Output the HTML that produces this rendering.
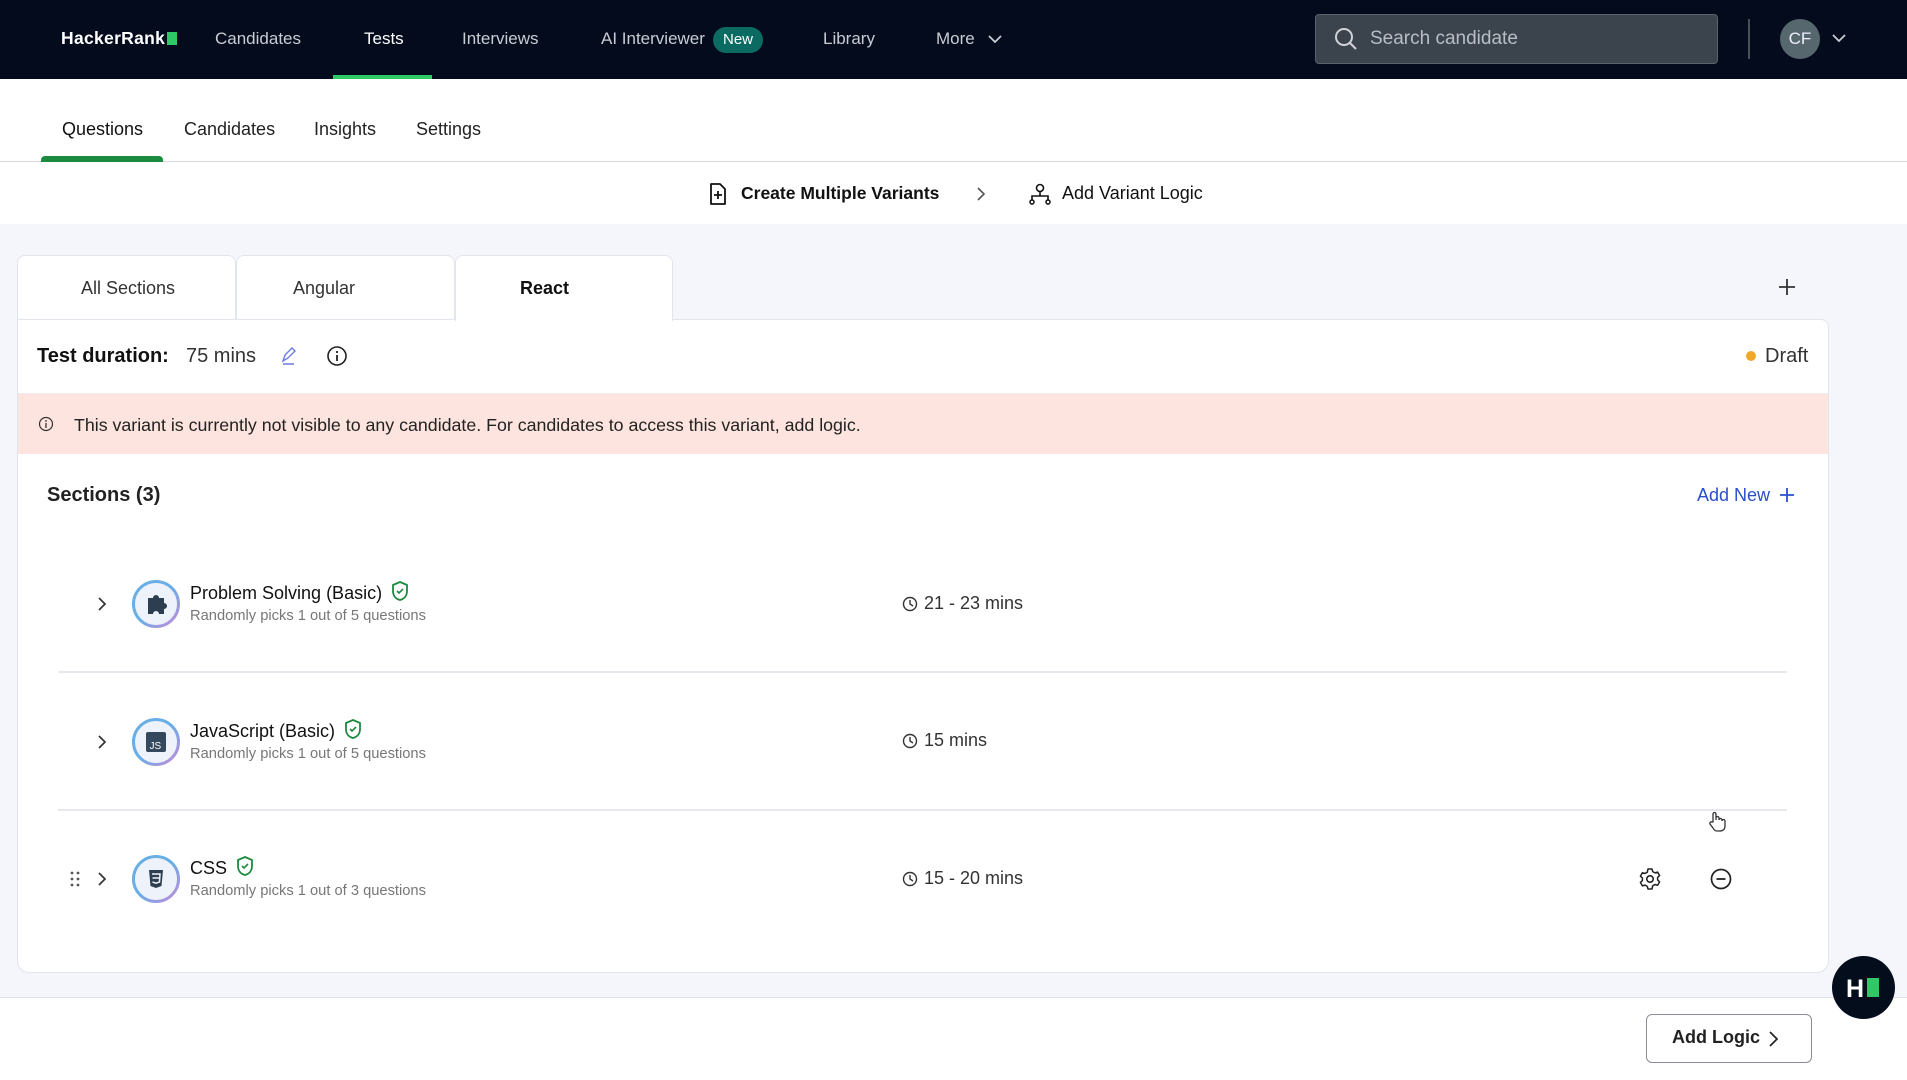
<!DOCTYPE html>
<html><head><meta charset="utf-8"><style>
*{box-sizing:border-box;margin:0;padding:0}
body{width:1907px;height:1080px;position:relative;overflow:hidden;background:#f5f6fb;font-family:"Liberation Sans",sans-serif;color:#1a1a1a}
.a{position:absolute;white-space:nowrap}
.nav{left:0;top:0;width:1907px;height:79px;background:#030b1c}
.nv{color:#c9ccd3;font-size:17px;top:29px}
svg{position:absolute}
.sh{position:relative;display:inline-block;vertical-align:-3px;margin-left:8px}
</style></head><body>
<div class="a nav"></div>
<div class="a" style="left:61px;top:28px;color:#fff;font-weight:bold;font-size:17.5px;letter-spacing:0.3px">HackerRank<span style="display:inline-block;width:10px;height:13px;background:#2ec866;margin-left:2px;vertical-align:-1px"></span></div>
<div class="a nv" style="left:215px">Candidates</div>
<div class="a nv" style="left:364px;color:#fff">Tests</div>
<div class="a" style="left:333px;top:75px;width:99px;height:4px;background:#2ec866"></div>
<div class="a nv" style="left:462px">Interviews</div>
<div class="a nv" style="left:601px">AI Interviewer</div>
<div class="a" style="left:713px;top:27px;width:50px;height:26px;border-radius:13px;background:#0b6b62;color:#fff;font-size:15px;text-align:center;line-height:26px">New</div>
<div class="a nv" style="left:823px">Library</div>
<div class="a nv" style="left:936px">More</div>
<svg style="left:987px;top:33px" width="16" height="12"><path d="M2 3l6 6 6-6" stroke="#c9ccd3" stroke-width="1.8" fill="none"/></svg>
<div class="a" style="left:1315px;top:14px;width:403px;height:50px;background:#3b434d;border:1px solid #5a626c;border-radius:4px"></div>
<svg style="left:1333px;top:26px" width="26" height="26"><circle cx="11" cy="11" r="8" stroke="#cfd3d8" stroke-width="2" fill="none"/><path d="M17 17l6 6" stroke="#cfd3d8" stroke-width="2"/></svg>
<div class="a" style="left:1370px;top:28px;color:#b9bec5;font-size:19px">Search candidate</div>
<div class="a" style="left:1748px;top:19px;width:2px;height:40px;background:#4a505a"></div>
<div class="a" style="left:1780px;top:19px;width:40px;height:40px;border-radius:50%;background:#57676e;color:#eef;font-size:17px;text-align:center;line-height:40px">CF</div>
<svg style="left:1831px;top:32px" width="16" height="12"><path d="M2 3l6 6 6-6" stroke="#c9ccd3" stroke-width="1.8" fill="none"/></svg>

<div class="a" style="left:0;top:79px;width:1907px;height:145px;background:#fff"></div>
<div class="a" style="left:62px;top:119px;font-size:18px;color:#111">Questions</div>
<div class="a" style="left:184px;top:119px;font-size:18px;color:#222">Candidates</div>
<div class="a" style="left:314px;top:119px;font-size:18px;color:#222">Insights</div>
<div class="a" style="left:416px;top:119px;font-size:18px;color:#222">Settings</div>
<div class="a" style="left:0;top:161px;width:1907px;height:1px;background:#d8dae2"></div>
<div class="a" style="left:41px;top:156px;width:122px;height:6px;background:#1c8a3f;border-radius:4px 4px 0 0"></div>
<svg style="left:707px;top:182px" width="22" height="24"><path d="M4 2h9l5 5v15H4z" stroke="#111" stroke-width="1.8" fill="none" stroke-linejoin="round"/><path d="M11 9v8M7 13h8" stroke="#111" stroke-width="1.8"/></svg>
<div class="a" style="left:741px;top:183px;font-size:17.5px;font-weight:bold;color:#111">Create Multiple Variants</div>
<svg style="left:975px;top:186px" width="12" height="16"><path d="M3 2l6 6-6 6" stroke="#555" stroke-width="1.6" fill="none"/></svg>
<svg style="left:1028px;top:182px" width="24" height="24"><circle cx="12" cy="6" r="3.5" stroke="#111" stroke-width="1.6" fill="none"/><path d="M12 10v4M4 18v-4h16v4" stroke="#111" stroke-width="1.6" fill="none"/><circle cx="4" cy="20" r="2" stroke="#111" stroke-width="1.5" fill="none"/><circle cx="20" cy="20" r="2" stroke="#111" stroke-width="1.5" fill="none"/></svg>
<div class="a" style="left:1062px;top:183px;font-size:18px;color:#111">Add Variant Logic</div>

<div class="a" style="left:17px;top:255px;width:219px;height:65px;background:#fff;border:1px solid #e3e5ec;border-radius:8px 8px 0 0"></div>
<div class="a" style="left:236px;top:255px;width:219px;height:65px;background:#fff;border:1px solid #e3e5ec;border-radius:8px 8px 0 0"></div>
<div class="a" style="left:455px;top:255px;width:218px;height:66px;background:#fff;border:1px solid #e3e5ec;border-bottom:none;border-radius:8px 8px 0 0;z-index:2"></div>
<div class="a" style="left:81px;top:278px;font-size:18px;color:#333">All Sections</div>
<div class="a" style="left:293px;top:278px;font-size:18px;color:#333">Angular</div>
<div class="a" style="left:520px;top:278px;font-size:18px;font-weight:bold;color:#111;z-index:3">React</div>
<svg style="left:1778px;top:278px" width="18" height="18"><path d="M9 1v16M1 9h16" stroke="#333" stroke-width="1.8"/></svg>

<div class="a" style="left:17px;top:319px;width:1812px;height:654px;background:#fff;border:1px solid #e3e5ec;border-radius:0 8px 12px 12px"></div>
<div class="a" style="left:37px;top:345px;font-size:20px;font-weight:bold;color:#111">Test duration:</div>
<div class="a" style="left:186px;top:345px;font-size:20px;color:#333">75 mins</div>
<svg style="left:280px;top:346px" width="18" height="20"><path d="M3 15l2-6 7-7 3 3-7 7zM3 18h11" stroke="#6a7de0" stroke-width="1.4" fill="none"/></svg>
<svg style="left:326px;top:345px" width="22" height="22"><circle cx="11" cy="11" r="9" stroke="#222" stroke-width="1.6" fill="none"/><path d="M11 10v6" stroke="#222" stroke-width="1.8"/><circle cx="11" cy="7" r="1.1" fill="#222"/></svg>
<div class="a" style="left:1746px;top:351px;width:10px;height:10px;border-radius:50%;background:#f0a926"></div>
<div class="a" style="left:1765px;top:345px;font-size:20px;color:#333">Draft</div>
<div class="a" style="left:18px;top:393px;width:1810px;height:61px;background:#fde4de;border-top:1px solid #eee"></div>
<svg style="left:38px;top:416px" width="16" height="16"><circle cx="8" cy="8" r="6.5" stroke="#333" stroke-width="1.2" fill="none"/><path d="M8 7v5" stroke="#333" stroke-width="1.3"/><circle cx="8" cy="5" r=".9" fill="#333"/></svg>
<div class="a" style="left:74px;top:415px;font-size:17.8px;color:#222">This variant is currently not visible to any candidate. For candidates to access this variant, add logic.</div>
<div class="a" style="left:47px;top:484px;font-size:20px;font-weight:bold;color:#222">Sections (3)</div>
<div class="a" style="left:1697px;top:485px;font-size:18px;color:#2a4fc9">Add New</div>
<svg style="left:1779px;top:487px" width="16" height="16"><path d="M8 1v14M1 8h14" stroke="#2a4fc9" stroke-width="1.8"/></svg>

<div class="a" style="left:58px;top:671px;width:1729px;height:2px;background:#e6e8ee"></div>
<div class="a" style="left:58px;top:809px;width:1729px;height:2px;background:#e6e8ee"></div>

<svg style="left:96px;top:596px" width="12" height="16"><path d="M3 2l6 6-6 6" stroke="#333" stroke-width="1.7" fill="none"/></svg>
<svg style="left:96px;top:734px" width="12" height="16"><path d="M3 2l6 6-6 6" stroke="#333" stroke-width="1.7" fill="none"/></svg>
<svg style="left:96px;top:871px" width="12" height="16"><path d="M3 2l6 6-6 6" stroke="#333" stroke-width="1.7" fill="none"/></svg>
<svg style="left:70px;top:870px" width="10" height="18"><g fill="#555"><circle cx="2" cy="3" r="1.4"/><circle cx="8" cy="3" r="1.4"/><circle cx="2" cy="9" r="1.4"/><circle cx="8" cy="9" r="1.4"/><circle cx="2" cy="15" r="1.4"/><circle cx="8" cy="15" r="1.4"/></g></svg>

<svg style="left:131px;top:579px" width="50" height="50"><defs><linearGradient id="g" x1="0" y1="0" x2="1" y2="1"><stop offset=".5" stop-color="#6aaee6"/><stop offset="1" stop-color="#c58ad8"/></linearGradient></defs><circle cx="25" cy="25" r="22.5" fill="#eef3fb" stroke="url(#g)" stroke-width="3"/><path d="M17 19h5a3 3 0 016 0h5v5a3 3 0 010 6v5h-5a3 3 0 00-6 0h-5z" fill="#2d3e50"/></svg>
<svg style="left:131px;top:717px" width="50" height="50"><circle cx="25" cy="25" r="22.5" fill="#eef3fb" stroke="url(#g)" stroke-width="3"/><rect x="15" y="15" width="20" height="20" rx="2" fill="#34495e"/><text x="18.5" y="32" font-family="Liberation Sans" font-size="10" fill="#fff">JS</text></svg>
<svg style="left:131px;top:854px" width="50" height="50"><circle cx="25" cy="25" r="22.5" fill="#eef3fb" stroke="url(#g)" stroke-width="3"/><path d="M18 16h14l-1.5 16-5.5 2-5.5-2z" fill="#2d3e50"/><path d="M21 20h8l-.5 8-3.5 1.2-3.5-1.2M21.5 24h7" stroke="#eef3fb" stroke-width="1.5" fill="none"/></svg>

<div class="a" style="left:190px;top:580px;font-size:18px;color:#111">Problem Solving (Basic)<svg class="sh" width="20" height="22"><path d="M10 2l7 3v6c0 5-3 8-7 9-4-1-7-4-7-9V5z" stroke="#1c8a3f" stroke-width="1.8" fill="none"/><path d="M7 11l2 2 4-4" stroke="#1c8a3f" stroke-width="1.6" fill="none"/></svg></div>
<div class="a" style="left:190px;top:608px;font-size:14.7px;color:#777">Randomly picks 1 out of 5 questions</div>
<div class="a" style="left:190px;top:718px;font-size:18px;color:#111">JavaScript (Basic)<svg class="sh" width="20" height="22"><path d="M10 2l7 3v6c0 5-3 8-7 9-4-1-7-4-7-9V5z" stroke="#1c8a3f" stroke-width="1.8" fill="none"/><path d="M7 11l2 2 4-4" stroke="#1c8a3f" stroke-width="1.6" fill="none"/></svg></div>
<div class="a" style="left:190px;top:746px;font-size:14.7px;color:#777">Randomly picks 1 out of 5 questions</div>
<div class="a" style="left:190px;top:855px;font-size:18px;color:#111">CSS<svg class="sh" width="20" height="22"><path d="M10 2l7 3v6c0 5-3 8-7 9-4-1-7-4-7-9V5z" stroke="#1c8a3f" stroke-width="1.8" fill="none"/><path d="M7 11l2 2 4-4" stroke="#1c8a3f" stroke-width="1.6" fill="none"/></svg></div>
<div class="a" style="left:190px;top:883px;font-size:14.7px;color:#777">Randomly picks 1 out of 3 questions</div>

<svg style="left:902px;top:596px" width="16" height="16"><circle cx="8" cy="8" r="6.5" stroke="#333" stroke-width="1.4" fill="none"/><path d="M8 4v4l3 2" stroke="#333" stroke-width="1.4" fill="none"/></svg>
<div class="a" style="left:924px;top:593px;font-size:18px;color:#333">21 - 23 mins</div>
<svg style="left:902px;top:733px" width="16" height="16"><circle cx="8" cy="8" r="6.5" stroke="#333" stroke-width="1.4" fill="none"/><path d="M8 4v4l3 2" stroke="#333" stroke-width="1.4" fill="none"/></svg>
<div class="a" style="left:924px;top:730px;font-size:18px;color:#333">15 mins</div>
<svg style="left:902px;top:871px" width="16" height="16"><circle cx="8" cy="8" r="6.5" stroke="#333" stroke-width="1.4" fill="none"/><path d="M8 4v4l3 2" stroke="#333" stroke-width="1.4" fill="none"/></svg>
<div class="a" style="left:924px;top:868px;font-size:18px;color:#333">15 - 20 mins</div>

<svg style="left:1638px;top:867px" width="24" height="24"><circle cx="12" cy="12" r="3.2" stroke="#222" stroke-width="1.6" fill="none"/><path d="M10 2h4l.7 2.6 2.3 1.3 2.6-.8 2 3.5-2 1.8v2.6l2 1.8-2 3.5-2.6-.8-2.3 1.3L14 22h-4l-.7-2.6-2.3-1.3-2.6.8-2-3.5 2-1.8v-2.6l-2-1.8 2-3.5 2.6.8 2.3-1.3z" stroke="#222" stroke-width="1.5" fill="none" stroke-linejoin="round"/></svg>
<svg style="left:1709px;top:867px" width="24" height="24"><circle cx="12" cy="12" r="9.5" stroke="#222" stroke-width="1.7" fill="none"/><path d="M7.5 12h9" stroke="#222" stroke-width="1.8"/></svg>
<svg style="left:1707px;top:810px" width="20" height="24"><path d="M6 12V4a1.5 1.5 0 013 0v6V8a1.5 1.5 0 013 0v2a1.5 1.5 0 013 0v1a1.5 1.5 0 013 0v5c0 3-2 5-5 5h-3c-2 0-3-1-4-3l-3-4a1.5 1.5 0 012-2z" stroke="#333" stroke-width="1.3" fill="#fff"/></svg>

<div class="a" style="left:0;top:997px;width:1907px;height:83px;background:#fff;border-top:1px solid #e0e2e8"></div>
<div class="a" style="left:1646px;top:1014px;width:166px;height:49px;border:1.5px solid #8a8d94;border-radius:6px;background:#fff"></div>
<div class="a" style="left:1672px;top:1027px;font-size:18px;font-weight:bold;color:#222">Add Logic</div>
<svg style="left:1767px;top:1030px" width="12" height="18"><path d="M3 2l7 7-7 7" stroke="#222" stroke-width="1.7" fill="none"/></svg>
<div class="a" style="left:1832px;top:956px;width:63px;height:63px;border-radius:50%;background:#040d1c"></div>
<div class="a" style="left:1846px;top:975px;font-size:25px;font-weight:bold;color:#fff">H</div>
<div class="a" style="left:1867px;top:978px;width:12px;height:19px;background:#2ec866"></div>
</body></html>
